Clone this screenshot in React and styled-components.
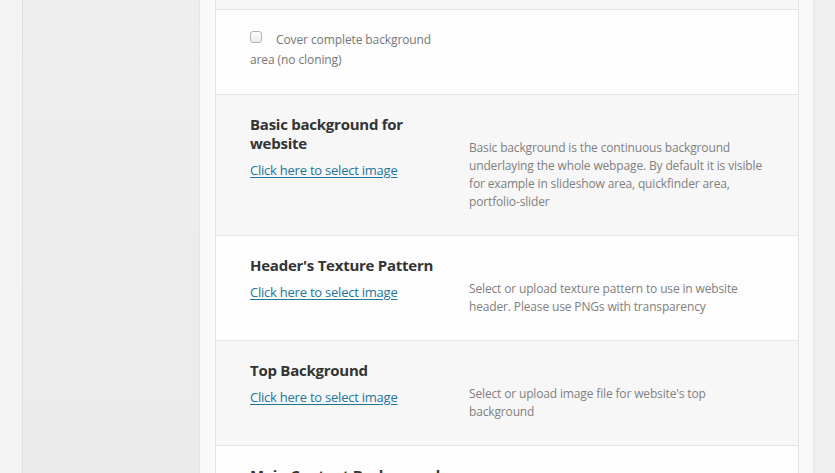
import React from "react";
import styled, { createGlobalStyle } from "styled-components";

const Global = createGlobalStyle`
  html, body { margin: 0; padding: 0; }
  body {
    background: #f0f0f0;
    font-family: "Open Sans", "Liberation Sans", sans-serif;
    overflow: hidden;
  }
`;

const Page = styled.div`
  display: flex;
  height: 473px;
  width: 835px;
  overflow: hidden;
`;

const Gutter = styled.div`
  width: 22px;
  flex: none;
  background: #f3f3f3;
`;

const Sidebar = styled.div`
  width: 176px;
  flex: none;
  background: linear-gradient(180deg, #eeeeee 0%, #ebebeb 100%);
  border-left: 1px solid #e0e0e0;
  border-right: 1px solid #e4e4e4;
`;

const Main = styled.div`
  flex: none;
  width: 584px;
  padding: 0 14px 0 15px;
  background: #f9f9f9;
  border-right: 1px solid #e6e6e6;
`;

const RightArea = styled.div`
  flex: 1;
  background: #efefef;
`;

const Panel = styled.div`
  border-left: 1px solid #e3e3e3;
  border-right: 1px solid #e3e3e3;
  display: flex;
  flex-direction: column;
`;

const Row = styled.div`
  display: grid;
  grid-template-columns: 200px 300px;
  column-gap: 19px;
  padding: ${(p) => p.$pad || "20px 29px 24px 34px"};
  background: ${(p) => (p.$alt ? "#f7f7f7" : "#fdfdfd")};
  border-bottom: 1px solid #e5e5e5;
  box-sizing: border-box;
`;

const TopStub = styled.div`
  height: 10px;
  box-sizing: border-box;
  background: #f7f7f7;
  border-bottom: 1px solid #e5e5e5;
`;

const LabelCol = styled.div`
  display: flex;
  flex-direction: column;
  align-items: flex-start;
`;

const Title = styled.div`
  font-size: 15px;
  font-weight: 700;
  line-height: 19px;
  letter-spacing: -0.25px;
  color: #333333;
`;

const SelectLink = styled.a`
  margin-top: 7px;
  font-size: 13px;
  line-height: 20px;
  letter-spacing: -0.23px;
  color: #21759b;
  text-decoration: underline;
  text-underline-offset: 2px;
  cursor: pointer;
`;

const Description = styled.div`
  padding-top: 24px;
  font-size: 12px;
  line-height: 18px;
  letter-spacing: -0.15px;
  color: #808080;
`;

const CheckLabel = styled.label`
  font-size: 12px;
  line-height: 20px;
  letter-spacing: -0.1px;
  color: #777777;
`;

const Check = styled.input.attrs({ type: "checkbox" })`
  appearance: none;
  -webkit-appearance: none;
  width: 12px;
  height: 12px;
  margin: 0 14px 0 0;
  border: 1px solid #b4b4b4;
  border-radius: 3px;
  background: linear-gradient(180deg, #ffffff 0%, #ececec 100%);
  box-sizing: border-box;
  vertical-align: 1px;
  position: relative;
  top: 0;
`;

const rows = [
  {
    title: "Basic background for website",
    desc: "Basic background is the continuous background underlaying the whole webpage. By default it is visible for example in slideshow area, quickfinder area, portfolio-slider",
    alt: true,
  },
  {
    title: "Header's Texture Pattern",
    desc: "Select or upload texture pattern to use in website header. Please use PNGs with transparency",
    alt: false,
  },
  {
    title: "Top Background",
    desc: "Select or upload image file for website's top background",
    alt: true,
  },
  {
    title: "Main Content Background",
    desc: "Select or upload image file for main content area background",
    alt: false,
  },
];

export default function App() {
  return (
    <>
      <Global />
      <Page>
        <Gutter />
        <Sidebar />
        <Main>
          <Panel>
            <TopStub />
            <Row $pad="20px 29px 24px 34px">
              <LabelCol>
                <CheckLabel>
                  <Check />
                  Cover complete background area (no cloning)
                </CheckLabel>
              </LabelCol>
              <div />
            </Row>
            {rows.map((r) => (
              <Row key={r.title} $alt={r.alt}>
                <LabelCol>
                  <Title>{r.title}</Title>
                  <SelectLink>Click here to select image</SelectLink>
                </LabelCol>
                <Description>{r.desc}</Description>
              </Row>
            ))}
          </Panel>
        </Main>
        <RightArea />
      </Page>
    </>
  );
}
